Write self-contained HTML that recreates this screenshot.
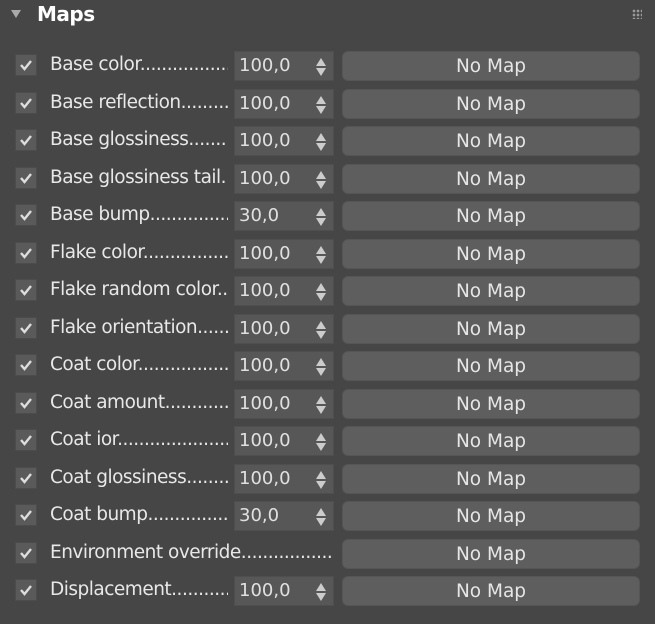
<!DOCTYPE html>
<html><head><meta charset="utf-8"><style>
*{margin:0;padding:0;box-sizing:border-box}
body{width:655px;height:624px;background:#464646;font-family:"DejaVu Sans","Liberation Sans",sans-serif;color:#e8e8e8;position:relative;overflow:hidden}
.hdr{position:absolute;left:37px;top:2px;font-weight:bold;font-size:20px;color:#fff;font-family:"DejaVu Sans",sans-serif;letter-spacing:-0.5px}
.tri{position:absolute;left:11px;top:10px;width:0;height:0;border-left:5px solid transparent;border-right:5px solid transparent;border-top:8px solid #aaa}
.grip{position:absolute;left:632px;top:9px;width:10px;height:10px;background-image:radial-gradient(#999 45%,transparent 50%);background-size:4px 4px}
.row{position:absolute;left:0;height:30px;width:655px}
.cb{position:absolute;left:15px;top:3px;width:22px;height:22px;background:#5a5a5a;border:1px solid #4c4c4c}
.cb svg{position:absolute;left:3px;top:3px}
.lb{position:absolute;left:50px;top:1px;width:178px;white-space:nowrap;overflow:hidden;font-size:18.5px;line-height:26px;letter-spacing:-0.5px}
.lb.w{width:284px}
.sp{position:absolute;left:234px;top:0;width:100px;height:30px;background:#575757;border:1px solid #4e4e4e;font-size:18px;line-height:28px;padding-left:4px;color:#e0e0e0}
.ar{position:absolute;right:6px;top:5px}
.bt{position:absolute;left:342px;top:0;width:298px;height:30px;background:#5e5e5e;border-radius:6px;border:1px solid #555;text-align:center;font-size:18.5px;line-height:29px;color:#e6e6e6}
</style></head><body>
<div class="tri"></div><div class="hdr">Maps</div><div class="grip"></div>
<div id="rows"></div>
<script>
var L=[["Base color","100,0"],["Base reflection","100,0"],["Base glossiness","100,0"],["Base glossiness tail","100,0"],["Base bump","30,0"],["Flake color","100,0"],["Flake random color","100,0"],["Flake orientation","100,0"],["Coat color","100,0"],["Coat amount","100,0"],["Coat ior","100,0"],["Coat glossiness","100,0"],["Coat bump","30,0"],["Environment override",null],["Displacement","100,0"]];
var h="";
L.forEach(function(r,i){
var t=Math.round(51+i*37.5);
h+='<div class="row" style="top:'+t+'px"><div class="cb"><svg width="14" height="14" viewBox="0 0 14 14"><path d="M2 7 L5.5 11 L12 3" stroke="#ddd" stroke-width="2.4" fill="none"/></svg></div>';
h+='<div class="lb'+(r[1]?'':' w')+'">'+r[0]+'..............................................</div>';
if(r[1])h+='<div class="sp">'+r[1]+'<svg class="ar" width="12" height="20" viewBox="0 0 12 20"><path d="M6 1 L11 9 L1 9Z M1 11 L11 11 L6 19Z" fill="#ccc"/></svg></div>';
h+='<div class="bt">No Map</div></div>';
});
document.getElementById("rows").innerHTML=h;
</script>
</body></html>
